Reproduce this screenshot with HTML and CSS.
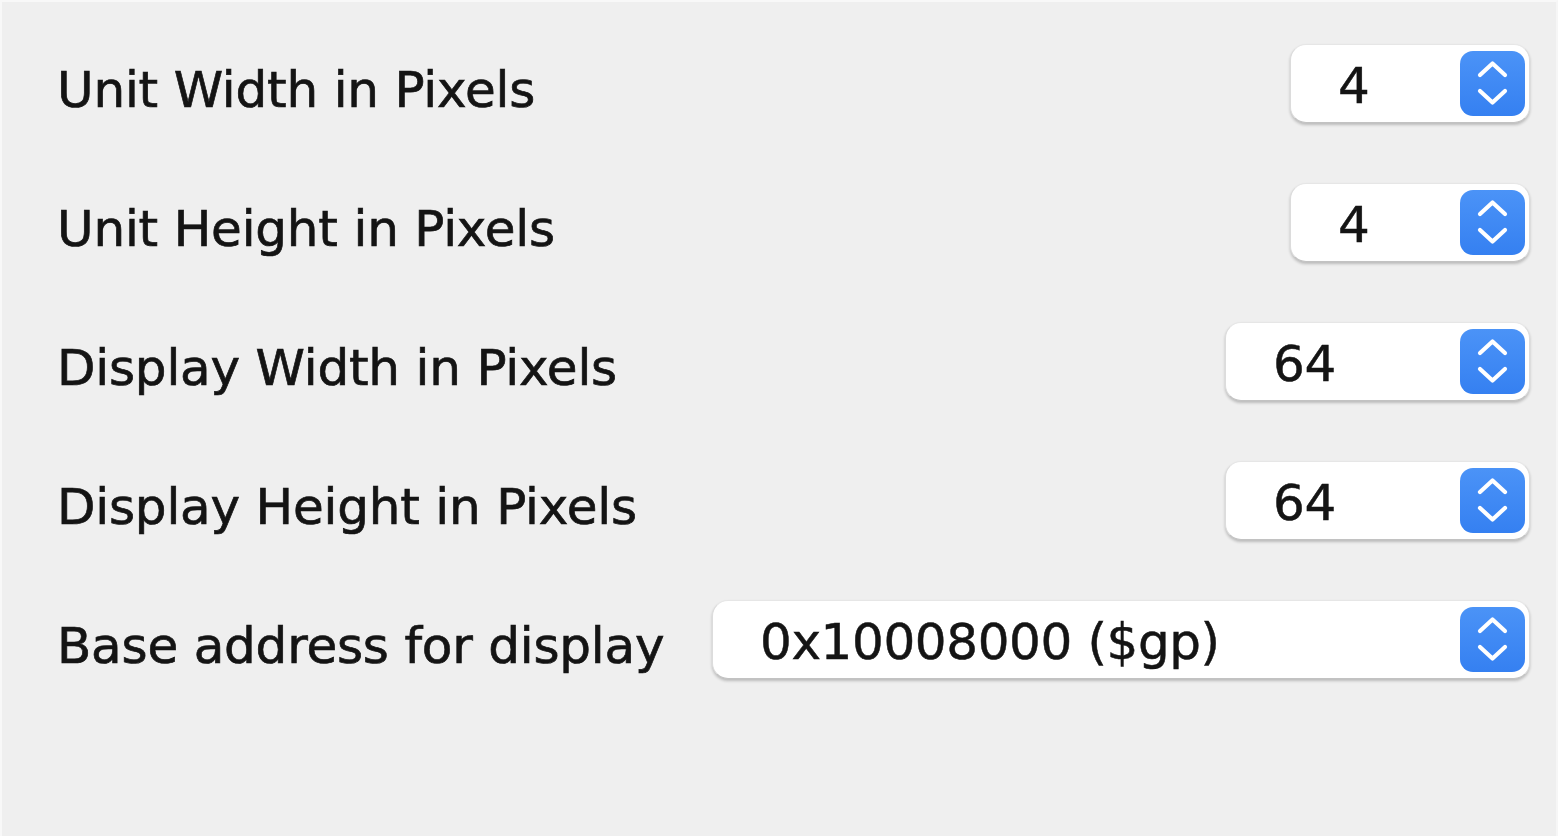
FILE: index.html
```html
<!DOCTYPE html>
<html>
<head>
<meta charset="utf-8">
<link rel="stylesheet" href="styles.css">
</head>
<body>
<div class="panel">
  <div class="row">
    <div class="label">Unit Width in Pixels</div>
    <div class="select w-small">
      <span class="value">4</span>
      <span class="stepper"><svg viewBox="0 0 65 65" width="65" height="65"><path d="M20 24 L32.5 12.5 L45 24 M20 40 L32.5 51.5 L45 40" /></svg></span>
    </div>
  </div>
  <div class="row">
    <div class="label">Unit Height in Pixels</div>
    <div class="select w-small">
      <span class="value">4</span>
      <span class="stepper"><svg viewBox="0 0 65 65" width="65" height="65"><path d="M20 24 L32.5 12.5 L45 24 M20 40 L32.5 51.5 L45 40" /></svg></span>
    </div>
  </div>
  <div class="row">
    <div class="label">Display Width in Pixels</div>
    <div class="select w-mid">
      <span class="value">64</span>
      <span class="stepper"><svg viewBox="0 0 65 65" width="65" height="65"><path d="M20 24 L32.5 12.5 L45 24 M20 40 L32.5 51.5 L45 40" /></svg></span>
    </div>
  </div>
  <div class="row">
    <div class="label">Display Height in Pixels</div>
    <div class="select w-mid">
      <span class="value">64</span>
      <span class="stepper"><svg viewBox="0 0 65 65" width="65" height="65"><path d="M20 24 L32.5 12.5 L45 24 M20 40 L32.5 51.5 L45 40" /></svg></span>
    </div>
  </div>
  <div class="row">
    <div class="label">Base address for display</div>
    <div class="select w-wide">
      <span class="value">0x10008000 ($gp)</span>
      <span class="stepper"><svg viewBox="0 0 65 65" width="65" height="65"><path d="M20 24 L32.5 12.5 L45 24 M20 40 L32.5 51.5 L45 40" /></svg></span>
    </div>
  </div>
</div>
</body>
</html>
```

FILE: styles.css
```css
html, body {
  margin: 0;
  padding: 0;
  height: 100%;
}

body {
  background: #efefef;
  font-family: "DejaVu Sans", "Liberation Sans", sans-serif;
  color: #141414;
}

.panel {
  box-sizing: border-box;
  height: 836px;
  border-top: 2px solid #f8f8f8;
  border-left: 2px solid #f8f8f8;
  border-right: 2px solid #f6f6f6;
  padding: 42px 26px 0 55px;
  display: flex;
  flex-direction: column;
  gap: 60px;
}

.row {
  display: flex;
  align-items: flex-start;
  justify-content: space-between;
  height: 79px;
}

.label {
  font-size: 50px;
  line-height: 58px;
  margin-top: 17px;
  white-space: nowrap;
  letter-spacing: -0.2px;
  -webkit-text-stroke: 0.7px #141414;
}

.select {
  box-sizing: border-box;
  height: 79px;
  background: #ffffff;
  border-radius: 16px;
  border: 1px solid #dcdcdc;
  border-top-color: #e6e6e6;
  border-bottom-color: #c2c2c2;
  box-shadow: 0 2px 3px rgba(0, 0, 0, 0.22);
  display: flex;
  align-items: center;
  justify-content: space-between;
  padding: 0 4px 0 47px;
}

.w-small { width: 240px; }
.w-mid { width: 305px; }
.w-wide { width: 818px; }

.value {
  font-size: 50px;
  line-height: 58px;
  padding-top: 4px;
  white-space: nowrap;
  letter-spacing: -0.4px;
  -webkit-text-stroke: 0.5px #141414;
}

.stepper {
  width: 65px;
  height: 65px;
  border-radius: 13px;
  background: linear-gradient(#4b93f7, #3580f1);
  display: flex;
}

.stepper svg path {
  fill: none;
  stroke: #ffffff;
  stroke-width: 4.2;
  stroke-linecap: round;
  stroke-linejoin: round;
}
```
